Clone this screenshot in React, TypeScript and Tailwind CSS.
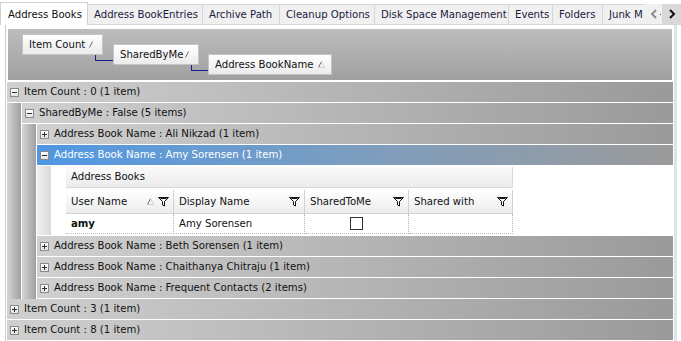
import React from "react";

const font = "font-['DejaVu_Sans_Condensed','DejaVu_Sans',sans-serif]";

const tabs: { label: string; w: string }[] = [
  { label: "Address BookEntries", w: "w-[115px]" },
  { label: "Archive Path", w: "w-[77px]" },
  { label: "Cleanup Options", w: "w-[95px]" },
  { label: "Disk Space Management", w: "w-[134px]" },
  { label: "Events", w: "w-[44px]" },
  { label: "Folders", w: "w-[50px]" },
];

function SortGlyph({ tri = false }: { tri?: boolean }) {
  return (
    <svg width="7" height="7" viewBox="0 0 7 7" aria-hidden>
      <path d="M0.5 6.5 L3.5 0.5" stroke="#6b6b6b" strokeWidth="1" fill="none" />
      {tri && <path d="M3.5 0.5 L6.5 6.5 M0.5 6.5 H6.5" stroke="#d0d0d0" strokeWidth="1" fill="none" />}
    </svg>
  );
}

function Funnel() {
  return (
    <svg width="11" height="10" viewBox="0 0 11 10" aria-hidden>
      <path d="M0.5 0.5 H10.5 L6.5 4.5 V9 L4.5 8 V4.5 Z" stroke="#111" strokeWidth="1" fill="none" />
      <path d="M2.5 1.5 H8.5" stroke="#111" strokeWidth="1" />
    </svg>
  );
}

function Toggle({ open }: { open: boolean }) {
  return (
    <span className="relative flex h-[9px] w-[9px] shrink-0 items-center justify-center border border-[#8a8a8a] bg-gradient-to-b from-white to-[#e4e4e4]">
      <span className="absolute h-px w-[5px] bg-[#2d2d2d]" />
      {!open && <span className="absolute h-[5px] w-px bg-[#2d2d2d]" />}
    </span>
  );
}

function GroupRow({ text, open = false, selected = false }: { text: string; open?: boolean; selected?: boolean }) {
  return (
    <div
      className={
        "flex h-[21px] items-center border-b border-white pl-[3px] " +
        (selected
          ? "bg-gradient-to-r from-[#4e97e4] via-[#7c9dbf] to-[#9b9b9b] text-white"
          : "bg-gradient-to-r from-[#d0d0d0] to-[#9a9a9a] text-[#111]")
      }
    >
      <Toggle open={open} />
      <span className="ml-[5px] whitespace-nowrap">{text}</span>
    </div>
  );
}

function Indent() {
  return <div className="w-[15px] shrink-0 border-r border-white bg-gradient-to-r from-[#d4d4d4] via-[#bababa] to-[#a0a0a0]" />;
}

function Chip({ label, tri, className }: { label: string; tri?: boolean; className: string }) {
  return (
    <div
      className={
        "relative flex h-[21px] shrink-0 items-center justify-between border border-[#c4c4c4] bg-gradient-to-b from-white to-[#ebebeb] pr-[6px] pl-[6px] text-[#111] " +
        className
      }
    >
      <span className="whitespace-nowrap">{label}</span>
      <SortGlyph tri={tri} />
    </div>
  );
}

function HeaderCell({ label, w, sort }: { label: string; w: string; sort?: boolean }) {
  return (
    <div className={"flex h-full items-center justify-between border-r border-b border-[#d2d2d2] bg-gradient-to-b from-white to-[#ececec] pr-[4px] pl-[5px] " + w}>
      <span className="whitespace-nowrap">{label}</span>
      <span className="flex items-center gap-[4px]">
        {sort && <SortGlyph tri />}
        <Funnel />
      </span>
    </div>
  );
}

function NestedGrid() {
  return (
    <div className="mt-px w-[447px] text-[#111]">
      <div className="flex h-[21px] items-center border-r border-b border-[#d8d8d8] bg-gradient-to-b from-[#fbfbfb] to-[#ebebeb] pl-[5px]">
        Address Books
      </div>
      <div className="mt-[2px] flex h-[24px]">
        <HeaderCell label="User Name" w="w-[108px]" sort />
        <HeaderCell label="Display Name" w="w-[131px]" />
        <HeaderCell label="SharedToMe" w="w-[104px]" />
        <HeaderCell label="Shared with" w="w-[104px]" />
      </div>
      <div className="flex h-[20px]">
        <div className="flex w-[108px] items-center border-r border-b border-dotted border-[#b9b9b9] pl-[5px] font-bold">amy</div>
        <div className="flex w-[131px] items-center border-r border-b border-dotted border-[#b9b9b9] pl-[5px]">Amy Sorensen</div>
        <div className="flex w-[104px] items-center justify-center border-r border-b border-dotted border-[#b9b9b9]">
          <span className="h-[13px] w-[13px] border border-[#333] bg-white" />
        </div>
        <div className="w-[104px] border-r border-b border-dotted border-[#b9b9b9]" />
      </div>
    </div>
  );
}

export default function App() {
  return (
    <div className={"h-[341px] w-[681px] overflow-hidden bg-white text-[11.25px] leading-none " + font}>
      {/* tab strip */}
      <div className="flex h-[25px] items-end">
        <div className="flex h-[23px] w-[88px] shrink-0 items-center border-t border-r border-l border-[#d0d0d0] bg-white pt-px pl-[7px] text-[#111]">
          Address Books
        </div>
        {tabs.map((t) => (
          <div
            key={t.label}
            className={"flex h-[21px] shrink-0 items-center border-t border-r border-b border-[#d6d6d6] bg-[#f0f0f0] pt-px pl-[6px] text-[#1a1a40] " + t.w}
          >
            <span className="whitespace-nowrap">{t.label}</span>
          </div>
        ))}
        <div className="flex h-[21px] w-[42px] shrink-0 items-center border-t border-b border-[#d6d6d6] bg-[#f0f0f0] pt-px pl-[6px] text-[#1a1a40]">
          <span className="whitespace-nowrap">Junk M</span>
        </div>
        <div className="flex h-[21px] flex-1 items-center border-b border-[#d6d6d6] bg-[#f0f0f0]">
          <svg width="8" height="10" viewBox="0 0 8 10" className="ml-[5px]" aria-hidden>
            <path d="M6 1 L2 5 L6 9" stroke="#8c8c8c" strokeWidth="2" fill="none" />
          </svg>
          <span className="ml-[2px] h-px w-px bg-[#555]" />
          <div className="ml-px flex h-full flex-1 items-center justify-center bg-[#d9d9d9]">
            <svg width="8" height="10" viewBox="0 0 8 10" aria-hidden>
              <path d="M2 1 L6 5 L2 9" stroke="#111" strokeWidth="2" fill="none" />
            </svg>
          </div>
        </div>
      </div>

      {/* content panel */}
      <div className="ml-[5px] w-[672px] border-r-[3px] border-l border-r-[#dde3ea] border-l-[#cdcdcd] pt-[3px] pr-px pl-px">
        {/* group-by panel */}
        <div className="flex h-[53px] items-start border border-white bg-gradient-to-b from-[#bdbdbd] to-[#a0a0a0]">
          <Chip label="Item Count" className="mt-[5px] ml-[14px] w-[81px]" />
          <div className="mt-[26px] ml-[-8px] h-[6px] w-[18px] shrink-0 border-b border-l border-[#1b1b8c]" />
          <Chip label="SharedByMe" className="mt-[15px] w-[86px]" />
          <div className="mt-[36px] ml-[-8px] h-[6px] w-[17px] shrink-0 border-b border-l border-[#1b1b8c]" />
          <Chip label="Address BookName" tri className="mt-[25px] w-[124px]" />
        </div>

        {/* grouped rows */}
        <div className="mt-px">
          <GroupRow text="Item Count : 0 (1 item)" open />
          <div className="flex">
            <Indent />
            <div className="flex-1">
              <GroupRow text="SharedByMe : False (5 items)" open />
              <div className="flex">
                <Indent />
                <div className="flex-1">
                  <GroupRow text="Address Book Name : Ali Nikzad (1 item)" />
                  <GroupRow text="Address Book Name : Amy Sorensen (1 item)" open selected />
                  <div className="flex h-[70px] border-b border-white bg-white">
                    <div className="w-[14px] shrink-0 bg-gradient-to-r from-[#efefef] to-[#dadada]" />
                    <div className="pl-[15px]">
                      <NestedGrid />
                    </div>
                  </div>
                  <GroupRow text="Address Book Name : Beth Sorensen (1 item)" />
                  <GroupRow text="Address Book Name : Chaithanya Chitraju (1 item)" />
                  <GroupRow text="Address Book Name : Frequent Contacts (2 items)" />
                </div>
              </div>
            </div>
          </div>
          <GroupRow text="Item Count : 3 (1 item)" />
          <GroupRow text="Item Count : 8 (1 item)" />
        </div>
      </div>
    </div>
  );
}
